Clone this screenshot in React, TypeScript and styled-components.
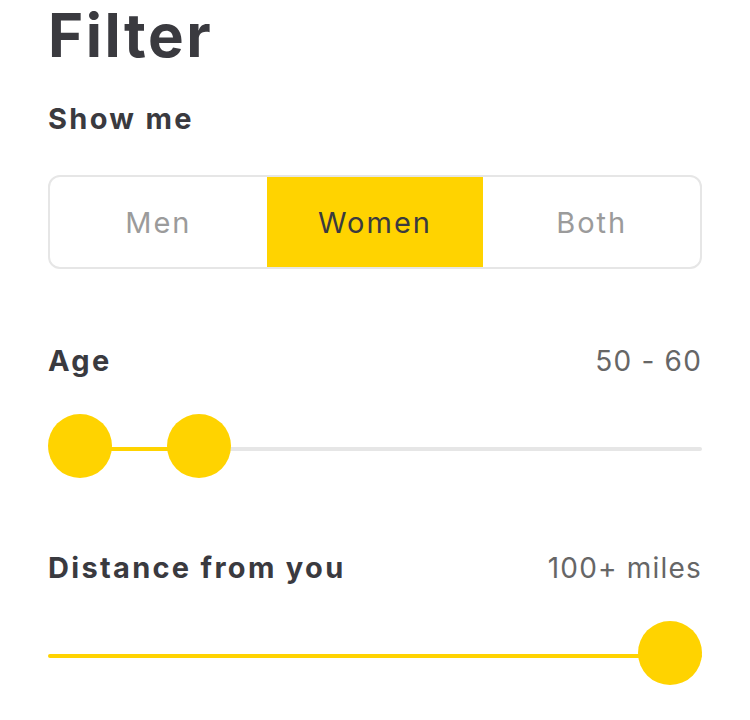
import React from "react";
import styled, { createGlobalStyle } from "styled-components";

const Global = createGlobalStyle`
  html, body { margin: 0; padding: 0; background: #fff; }
  body { font-family: Inter, "Open Sans", sans-serif; color: #3a3a3f; }
`;

const YELLOW = "#ffd300";

const Page = styled.div`
  width: 654px;
  padding: 4px 48px 0;
  display: flex;
  flex-direction: column;
`;

const Title = styled.h1`
  margin: 0;
  font-size: 60px;
  line-height: 62px;
  font-weight: 700;
  letter-spacing: 2.5px;
  color: #3a3a3f;
`;

const SectionLabel = styled.div`
  font-size: 29px;
  line-height: 36px;
  font-weight: 700;
  letter-spacing: 2.3px;
  color: #3a3a3f;
`;

const Segmented = styled.div`
  margin-top: 38px;
  height: 94px;
  border: 2px solid #e6e6e6;
  border-radius: 12px;
  box-sizing: border-box;
  display: grid;
  grid-template-columns: 1fr 1fr 1fr;
  overflow: hidden;
`;

const Segment = styled.div<{ $active?: boolean }>`
  display: flex;
  align-items: center;
  justify-content: center;
  font-size: 29px;
  font-weight: 400;
  letter-spacing: 2px;
  color: ${(p) => (p.$active ? "#3a3a3f" : "#9b9b9b")};
  background: ${(p) => (p.$active ? YELLOW : "transparent")};
  margin: ${(p) => (p.$active ? "-2px 0" : "0")};
`;

const Row = styled.div<{ $top: number }>`
  margin-top: ${(p) => p.$top}px;
  display: flex;
  justify-content: space-between;
  align-items: baseline;
`;

const Value = styled.div`
  font-size: 28px;
  line-height: 36px;
  font-weight: 400;
  letter-spacing: 1.2px;
  color: #666;
`;

const SliderWrap = styled.div<{ $top: number }>`
  margin-top: ${(p) => p.$top}px;
  position: relative;
  height: 64px;
`;

const Track = styled.div<{ $color: string }>`
  position: absolute;
  left: 0;
  right: 0;
  top: 33px;
  height: 4px;
  border-radius: 2px;
  background: ${(p) => p.$color};
`;

const Fill = styled.div`
  position: absolute;
  top: 33px;
  height: 4px;
  background: ${YELLOW};
`;

const Thumb = styled.div`
  position: absolute;
  top: 0;
  width: 64px;
  height: 64px;
  border-radius: 50%;
  background: ${YELLOW};
`;

export default function App() {
  return (
    <>
      <Global />
      <Page>
        <Title>Filter</Title>
        <SectionLabel style={{ marginTop: 35 }}>Show me</SectionLabel>
        <Segmented>
          <Segment>Men</Segment>
          <Segment $active>Women</Segment>
          <Segment>Both</Segment>
        </Segmented>

        <Row $top={74}>
          <SectionLabel>Age</SectionLabel>
          <Value>50 - 60</Value>
        </Row>
        <SliderWrap $top={35}>
          <Track $color="#e6e6e6" />
          <Fill style={{ left: 32, width: 119 }} />
          <Thumb style={{ left: 0 }} />
          <Thumb style={{ left: 119 }} />
        </SliderWrap>

        <Row $top={72}>
          <SectionLabel>Distance from you</SectionLabel>
          <Value>100+ miles</Value>
        </Row>
        <SliderWrap $top={35}>
          <Track $color={YELLOW} />
          <Thumb style={{ right: 0 }} />
        </SliderWrap>
      </Page>
    </>
  );
}
